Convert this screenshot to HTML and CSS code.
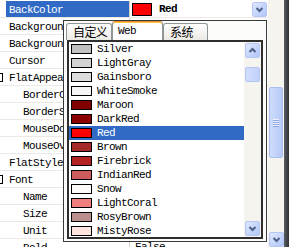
FILE: index.html
```html
<!doctype html>
<html>
    <head>
        <meta charset=utf-8>
        <title>BackColor editor</title>
        <link rel="stylesheet" href="styles.css">
    </head>
    <body>
        <div class="window">
            <div class="grid">
                <div class="row selected">
                    <span class="margin"></span>
                    <span class="name">BackColor</span>
                    <span class="value">
                        <i class="swatch big" style="background:#ff0000"></i><b>Red</b>
                        <span class="btn drop"><svg width="13" height="13" viewBox="0 0 13 13"><polyline points="3.5,5 6.5,8 9.5,5" fill="none" stroke="#4d6185" stroke-width="2"/></svg></span>
                    </span>
                </div>
                <div class="row"><span class="margin"></span><span class="name">Backgroun</span><span class="value"></span></div>
                <div class="row"><span class="margin"></span><span class="name">Backgroun</span><span class="value"></span></div>
                <div class="row"><span class="margin"></span><span class="name">Cursor</span><span class="value"></span></div>
                <div class="row"><span class="margin"><i class="expander"></i></span><span class="name">FlatAppea</span><span class="value"></span></div>
                <div class="row"><span class="margin"></span><span class="name sub">BorderC</span><span class="value"></span></div>
                <div class="row"><span class="margin"></span><span class="name sub">BorderS</span><span class="value"></span></div>
                <div class="row"><span class="margin"></span><span class="name sub">MouseDo</span><span class="value"></span></div>
                <div class="row"><span class="margin"></span><span class="name sub">MouseOv</span><span class="value"></span></div>
                <div class="row"><span class="margin"></span><span class="name">FlatStyle</span><span class="value"></span></div>
                <div class="row"><span class="margin"><i class="expander"></i></span><span class="name">Font</span><span class="value"></span></div>
                <div class="row"><span class="margin"></span><span class="name sub">Name</span><span class="value"></span></div>
                <div class="row"><span class="margin"></span><span class="name sub">Size</span><span class="value"></span></div>
                <div class="row"><span class="margin"></span><span class="name sub">Unit</span><span class="value"></span></div>
                <div class="row"><span class="margin"></span><span class="name sub">Bold</span><span class="value"><span class="text">False</span></span></div>
            </div>

            <div class="vscroll">
                <div class="track"><div class="thumb"><span class="grip"></span></div></div>
                <span class="btn"><svg width="13" height="13" viewBox="0 0 13 13"><polyline points="3.5,5 6.5,8 9.5,5" fill="none" stroke="#4d6185" stroke-width="2"/></svg></span>
            </div>
            <div class="edge"></div>

            <div class="popup">
                <div class="tabs">
                    <span class="tab t-custom">自定义</span>
                    <span class="tab t-web active">Web</span>
                    <span class="tab t-sys">系统</span>
                </div>
                <div class="listbox">
                    <ul class="colors">
                        <li><i class="swatch" style="background:#c0c0c0"></i>Silver</li>
                        <li><i class="swatch" style="background:#d3d3d3"></i>LightGray</li>
                        <li><i class="swatch" style="background:#dcdcdc"></i>Gainsboro</li>
                        <li><i class="swatch" style="background:#f5f5f5"></i>WhiteSmoke</li>
                        <li><i class="swatch" style="background:#800000"></i>Maroon</li>
                        <li><i class="swatch" style="background:#8b0000"></i>DarkRed</li>
                        <li class="selected"><i class="swatch" style="background:#ff0000"></i>Red</li>
                        <li><i class="swatch" style="background:#a52a2a"></i>Brown</li>
                        <li><i class="swatch" style="background:#b22222"></i>Firebrick</li>
                        <li><i class="swatch" style="background:#cd5c5c"></i>IndianRed</li>
                        <li><i class="swatch" style="background:#fffafa"></i>Snow</li>
                        <li><i class="swatch" style="background:#f08080"></i>LightCoral</li>
                        <li><i class="swatch" style="background:#bc8f8f"></i>RosyBrown</li>
                        <li><i class="swatch" style="background:#ffe4e1"></i>MistyRose</li>
                    </ul>
                    <div class="lscroll">
                        <span class="btn"><svg width="13" height="13" viewBox="0 0 13 13"><polyline points="3.5,8 6.5,5 9.5,8" fill="none" stroke="#4d6185" stroke-width="2"/></svg></span>
                        <div class="ltrack"><div class="lthumb"></div></div>
                        <span class="btn"><svg width="13" height="13" viewBox="0 0 13 13"><polyline points="3.5,5 6.5,8 9.5,5" fill="none" stroke="#4d6185" stroke-width="2"/></svg></span>
                    </div>
                </div>
            </div>
        </div>
    </body>
</html>
```

FILE: styles.css
```css
* {
  padding: 0;
  margin: 0;
  box-sizing: border-box;
}

ul {
  list-style: none;
}

body {
  background: #fff;
  color: #000;
  font: 11px/16px "Liberation Mono", monospace;
  letter-spacing: -0.6px;
}

.window {
  position: relative;
  display: flex;
  width: 289px;
  height: 247px;
  overflow: hidden;
  background: #fff;
}

/* property rows */
.grid {
  width: 268px;
  flex: none;
  padding-top: 1px;
}

.row {
  display: flex;
  height: 17px;
  border-bottom: 1px solid #ebe9e2;
}

.margin {
  width: 6px;
  flex: none;
  display: flex;
  align-items: center;
}

.expander {
  display: block;
  width: 9px;
  height: 9px;
  margin-left: -6px;
  border: 1px solid #000;
}

.name {
  width: 124px;
  flex: none;
  padding-left: 3px;
  padding-top: 1px;
  border-right: 1px solid #d4d0c8;
  white-space: nowrap;
  overflow: hidden;
}

.name.sub {
  padding-left: 17px;
}

.row.selected .name {
  background: #316ac5;
  color: #fff;
}

.value {
  flex: 1;
  display: flex;
  align-items: center;
  padding-left: 2px;
  white-space: nowrap;
  overflow: hidden;
}

.value .text {
  padding-left: 3px;
}

.value b {
  margin-left: 7px;
}

.swatch {
  display: block;
  flex: none;
  width: 21px;
  height: 10px;
  border: 1px solid #000;
}

.swatch.big {
  width: 20px;
  height: 13px;
}

/* xp style buttons */
.btn {
  display: flex;
  align-items: center;
  justify-content: center;
  flex: none;
  width: 15px;
  height: 15px;
  border: 1px solid #b4c6f3;
  border-radius: 2px;
  background: linear-gradient(135deg, #e0e8fd, #c3d3fb 60%, #b1c5f7);
}

.drop {
  margin-left: auto;
  margin-right: 1px;
}

/* outer scrollbar */
.vscroll {
  width: 16px;
  flex: none;
  display: flex;
  flex-direction: column;
  align-items: center;
  background: #f5f4ef;
}

.track {
  height: 240px;
  width: 100%;
  padding-top: 87px;
}

.thumb {
  display: flex;
  align-items: center;
  justify-content: center;
  width: 14px;
  height: 71px;
  margin-left: 1px;
  border: 1px solid #a9bff2;
  border-radius: 2px;
  background: linear-gradient(to right, #d0dcfc, #c2d3fb 50%, #b6c9f6);
}

.grip {
  width: 6px;
  height: 8px;
  background: repeating-linear-gradient(#eef3fe 0 1px, #8da6e4 1px 2px);
}

.edge {
  width: 5px;
  flex: none;
  background: linear-gradient(to right, #5a5d63, #2e3136);
}

/* colour popup */
.popup {
  position: absolute;
  left: 63px;
  top: 20px;
  width: 204px;
  height: 222px;
  padding-left: 2px;
  border: 1px solid #3a3a3a;
  background: #fcfcfb;
}

.tabs {
  display: flex;
  align-items: flex-end;
  height: 19px;
}

.tab {
  height: 17px;
  padding-left: 6px;
  border: 1px solid #8e9596;
  border-bottom: none;
  border-radius: 3px 3px 0 0;
  background: linear-gradient(#ffffff, #eceae4);
  font: 12px/16px "Noto Sans CJK SC", sans-serif;
  letter-spacing: -0.6px;
}

.t-custom {
  width: 46px;
}

.t-web {
  width: 51px;
  height: 19px;
  padding-left: 5px;
  font: 11px/18px "Liberation Mono", monospace;
  background: #fff;
  border-top: 1px solid #e68b2c;
  box-shadow: inset 0 1px 0 #ffc83c;
}

.t-sys {
  width: 45px;
}

.listbox {
  display: flex;
  width: 196px;
  height: 199px;
  margin-left: 1px;
  border: 2px solid #2e2e2e;
  background: #fff;
  overflow: hidden;
}

.colors {
  width: 175px;
  flex: none;
}

.colors li {
  display: flex;
  align-items: center;
  height: 14px;
  padding-left: 2px;
}

.colors .swatch {
  margin-right: 5px;
}

.colors li.selected {
  background: #316ac5;
  color: #fff;
}

.lscroll {
  width: 17px;
  flex: none;
  display: flex;
  flex-direction: column;
  align-items: center;
  padding: 1px 0;
  background: #f5f4ef;
}

.ltrack {
  flex: 1;
  width: 100%;
  padding-top: 9px;
}

.lthumb {
  width: 15px;
  height: 15px;
  margin-left: 1px;
  border: 1px solid #b4c6f3;
  border-radius: 2px;
  background: linear-gradient(to right, #d3defc, #c0d1fa);
}
```
